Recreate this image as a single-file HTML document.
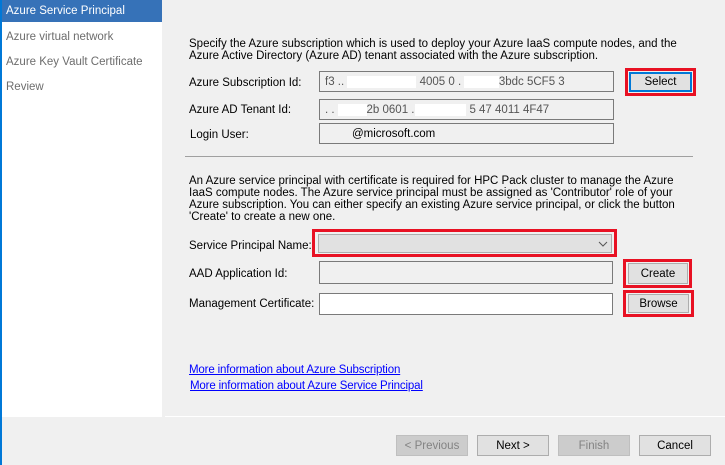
<!DOCTYPE html>
<html><head><style>
*{margin:0;padding:0;box-sizing:border-box}
body{width:725px;height:465px;background:#f0f0f0;font-family:"Liberation Sans",sans-serif;font-size:11.5px;color:#000;position:relative;overflow:hidden}
.a{position:absolute;white-space:nowrap}
.tb{position:absolute;border:1px solid #7a7a7a;background:#f0f0f0;height:21px;padding:4px 0 0 5px;overflow:hidden}
.red{position:absolute;border:3px solid #e81123}
.btn{position:absolute;background:#e1e1e1;border:1px solid #adadad;text-align:center;line-height:20px}
.p{line-height:12px}
a{color:#0000ff;text-decoration:underline}
</style></head><body>
<div class="a" style="left:0;top:0;width:2px;height:465px;background:#0078d7"></div>
<div class="a" style="left:2px;top:0;width:160px;height:417px;background:#fff"></div>
<div class="a" style="left:2px;top:0;width:160px;height:22px;background:#3672b8;color:#fff;padding:5px 0 0 4px">Azure Service Principal</div>
<div class="a" style="left:6px;top:31px;color:#6d6d6d">Azure virtual network</div>
<div class="a" style="left:6px;top:56px;color:#6d6d6d">Azure Key Vault Certificate</div>
<div class="a" style="left:6px;top:81px;color:#6d6d6d">Review</div>
<div class="a" style="left:165px;top:416px;width:560px;height:1px;background:#fff"></div>

<div class="a p" style="left:189px;top:38px">Specify the Azure subscription which is used to deploy your Azure IaaS compute nodes, and the<br>Azure Active Directory (Azure AD) tenant associated with the Azure subscription.</div>
<div class="a" style="left:189px;top:77px">Azure Subscription Id:</div>
<div class="tb" style="left:319px;top:71px;width:295px;color:#555">f3 ..  <span style="background:#fff;color:#fff">xxxxxxxxxxxx</span>  4005 0 .  <span style="background:#fff;color:#fff">xxxxxx</span>3bdc    5CF5  3</div>
<div class="red" style="left:625px;top:68px;width:71px;height:28px"></div>
<div class="btn" style="left:629px;top:72px;width:63px;height:20px;border:2px solid #0078d7;line-height:16px">Select</div>
<div class="a" style="left:189px;top:104px">Azure AD Tenant Id:</div>
<div class="tb" style="left:319px;top:99px;width:295px;color:#555">.  .  <span style="background:#fff;color:#fff">xxxxx</span>2b 0601  .<span style="background:#fff;color:#fff">xxxxxxxxx</span>  5 47   4011 4F47</div>
<div class="a" style="left:190px;top:129px">Login User:</div>
<div class="tb" style="left:319px;top:123px;width:295px;padding-left:32px">@microsoft.com</div>

<div class="a" style="left:185px;top:156px;width:508px;height:1px;background:#a0a0a0"></div>
<div class="a p" style="left:189px;top:175px">An Azure service principal with certificate is required for HPC Pack cluster to manage the Azure<br>IaaS compute nodes. The Azure service principal must be assigned as 'Contributor' role of your<br>Azure subscription. You can either specify an existing Azure service principal, or click the button<br>'Create' to create a new one.</div>

<div class="a" style="left:189px;top:240px">Service Principal Name:</div>
<div class="red" style="left:312px;top:229px;width:305px;height:28px"></div>
<div class="a" style="left:318px;top:234px;width:294px;height:19px;background:#e1e1e1;border:1px solid #adadad"></div>
<svg class="a" style="left:598px;top:241px" width="10" height="6"><path d="M1 1L5 5L9 1" fill="none" stroke="#555" stroke-width="1"/></svg>

<div class="a" style="left:189px;top:268px">AAD Application Id:</div>
<div class="tb" style="left:319px;top:261px;width:294px;height:23px"></div>
<div class="red" style="left:623px;top:259px;width:69px;height:29px"></div>
<div class="btn" style="left:628px;top:263px;width:60px;height:21px;line-height:21px">Create</div>

<div class="a" style="left:189px;top:298px">Management Certificate:</div>
<div class="tb" style="left:319px;top:293px;width:294px;height:22px;background:#fff"></div>
<div class="red" style="left:623px;top:290px;width:71px;height:27px"></div>
<div class="btn" style="left:628px;top:294px;width:61px;height:19px;line-height:19px">Browse</div>

<div class="a" style="left:189px;top:364px;letter-spacing:-0.15px"><a>More information about Azure Subscription</a></div>
<div class="a" style="left:190px;top:380px;letter-spacing:-0.15px"><a>More information about Azure Service Principal</a></div>

<div class="btn" style="left:396px;top:435px;width:72px;height:21px;background:#cccccc;border-color:#bfbfbf;color:#838383">&lt; Previous</div>
<div class="btn" style="left:477px;top:435px;width:72px;height:21px">Next &gt;</div>
<div class="btn" style="left:558px;top:435px;width:72px;height:21px;background:#cccccc;border-color:#bfbfbf;color:#838383">Finish</div>
<div class="btn" style="left:639px;top:435px;width:72px;height:21px">Cancel</div>
</body></html>
